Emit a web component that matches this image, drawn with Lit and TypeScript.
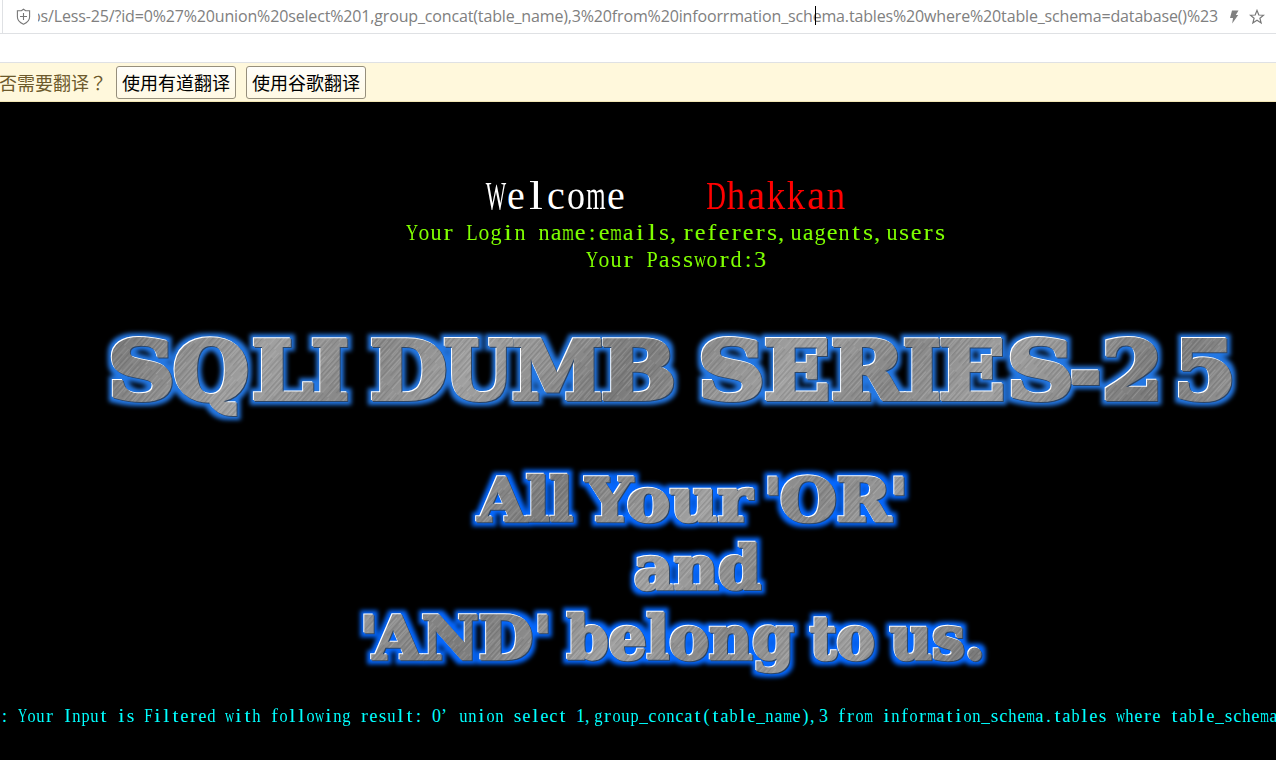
import { LitElement, html, svg, css } from "lit";
import { customElement, property } from "lit/decorators.js";

/* Fixed-pitch serif text: every character sits in a half-em cell. */
const SQUEEZE: Record<string, number> = {
  W: 0.54, m: 0.62, w: 0.7, D: 0.68, Y: 0.7, L: 0.78, P: 0.84, F: 0.84,
  h: 0.92, k: 0.92, n: 0.92, u: 0.92, o: 0.9, p: 0.9, g: 0.92, d: 0.92,
  b: 0.9, _: 0.96, i: 1.25, l: 1.25, t: 1.2, r: 1.15, s: 1.08, f: 1.1, I: 1.1,
};

@customElement("pitch-text")
export class PitchText extends LitElement {
  @property() text = "";
  static styles = css`
    :host { display: inline-flex; white-space: pre; font-family: "Liberation Serif", serif; }
    .c { display: inline-flex; justify-content: center; width: 0.5em; flex: none; }
    .p { justify-content: flex-start; }
  `;
  render() {
    return [...this.text].map((ch) => {
      const s = SQUEEZE[ch];
      const cls = ch === "," || ch === "’" ? "c p" : "c";
      return s
        ? html`<span class=${cls} style="transform:scaleX(${s})">${ch}</span>`
        : html`<span class=${cls}>${ch}</span>`;
    });
  }
}

/* [text, left, width] */
type Piece = [string, number, number];
const TITLE: Piece[] = [
  ["S", 108, 67], ["Q", 173, 76], ["L", 252, 61], ["I", 311, 38],
  ["D", 370, 77], ["U", 444, 69], ["M", 512, 91], ["B", 601, 75],
  ["S", 698, 67], ["E", 764, 66], ["R", 831, 73], ["I", 903, 38], ["E", 939, 66],
  ["S", 1007, 67], ["-", 1070, 31], ["2", 1102, 61], ["5", 1174, 62],
];
const LINES: { y: number; parts: Piece[] }[] = [
  { y: 418.5, parts: [["All", 478, 95], ["Your", 586, 166], ["'", 764, 18], ["OR", 780, 111], ["'", 890, 18]] },
  { y: 486.5, parts: [["and", 634, 127]] },
  { y: 556.5, parts: [["'", 360, 18], ["AND", 373, 160], ["'", 534, 18], ["belong", 567, 227], ["to", 810, 65], ["us.", 890, 95]] },
];

@customElement("metal-banner")
export class MetalBanner extends LitElement {
  static styles = css`
    :host { display: block; }
    svg { display: block; }
    text { font-family: "DejaVu Serif", serif; font-weight: 700; fill: url(#metal); stroke: url(#metal); stroke-linejoin: miter; }
    .title { font-size: 79.5px; stroke-width: 4px; }
    .sub { font-size: 60px; stroke-width: 2.6px; }
  `;
  private line(parts: Piece[], y: number, cls: string) {
    return parts.map(
      ([t, x, w]) => svg`<text class=${cls} x=${x} y=${y} textLength=${w} lengthAdjust="spacingAndGlyphs">${t}</text>`,
    );
  }
  private glow(id: string, color: string, r: number, blur: number) {
    return svg`<filter id=${id} filterUnits="userSpaceOnUse" x="0" y="150" width="1276" height="450" color-interpolation-filters="sRGB">
      <feMorphology in="SourceAlpha" operator="dilate" radius=${r} result="fat"></feMorphology>
      <feGaussianBlur in="fat" stdDeviation=${blur} result="soft"></feGaussianBlur>
      <feFlood flood-color=${color}></feFlood>
      <feComposite in2="soft" operator="in" result="halo"></feComposite>
      <feOffset in="SourceAlpha" dx="-1" dy="-1" result="up"></feOffset>
      <feFlood flood-color="#fff"></feFlood>
      <feComposite in2="up" operator="in" result="light"></feComposite>
      <feOffset in="SourceAlpha" dx="1" dy="1" result="down"></feOffset>
      <feFlood flood-color="#2c4566"></feFlood>
      <feComposite in2="down" operator="in" result="dark"></feComposite>
      <feMerge>
        <feMergeNode in="halo"></feMergeNode>
        <feMergeNode in="light"></feMergeNode>
        <feMergeNode in="dark"></feMergeNode>
        <feMergeNode in="SourceGraphic"></feMergeNode>
      </feMerge>
    </filter>`;
  }
  render() {
    return html`<svg width="1276" height="600" viewBox="0 0 1276 600">
      <defs>
        <linearGradient id="tone" gradientUnits="userSpaceOnUse" x1="0" y1="0" x2="190" y2="120" spreadMethod="reflect">
          <stop offset="0" stop-color="#868686"></stop>
          <stop offset="0.4" stop-color="#a0a0a0"></stop>
          <stop offset="0.7" stop-color="#8e8e8e"></stop>
          <stop offset="1" stop-color="#7a7a7a"></stop>
        </linearGradient>
        <pattern id="brush" patternUnits="userSpaceOnUse" width="23" height="61" patternTransform="rotate(42) scale(0.62 0.8)">
          <rect x="1" width="0.8" height="44" fill="#fff" opacity="0.28"></rect>
          <rect x="4" y="10" width="1" height="40" fill="#000" opacity="0.2"></rect>
          <rect x="6.5" width="0.8" height="30" fill="#fff" opacity="0.22"></rect>
          <rect x="9" y="20" width="0.7" height="41" fill="#fff" opacity="0.3"></rect>
          <rect x="11.5" width="1" height="50" fill="#000" opacity="0.17"></rect>
          <rect x="14" y="8" width="0.8" height="36" fill="#fff" opacity="0.24"></rect>
          <rect x="17" width="1" height="61" fill="#000" opacity="0.14"></rect>
          <rect x="20" y="25" width="0.8" height="36" fill="#fff" opacity="0.3"></rect>
        </pattern>
        <pattern id="metal" patternUnits="userSpaceOnUse" width="1276" height="600">
          <rect width="1276" height="600" fill="url(#tone)"></rect>
          <rect width="1276" height="600" fill="url(#brush)"></rect>
        </pattern>
        ${this.glow("glow-title", "#2377e3", 4, 1.9)}
        ${this.glow("glow-sub", "#0568ff", 4, 2)}
      </defs>
      <g filter="url(#glow-title)">${this.line(TITLE, 297, "title")}</g>
      <g filter="url(#glow-sub)">${LINES.map((l) => this.line(l.parts, l.y, "sub"))}</g>
    </svg>`;
  }
}

@customElement("app-root")
export class AppRoot extends LitElement {
  static styles = css`
    :host { display: block; width: 1276px; height: 760px; overflow: hidden; background: #000; }
    * { box-sizing: border-box; }
    .address { display: flex; align-items: center; height: 34px; background: #fff; border-bottom: 1px solid #dfe1e4; padding-left: 2px; }
    .field { display: flex; align-items: center; height: 33px; flex: 1; border-left: 1px solid #dfe1e4; padding-left: 12px; }
    .shield { flex: none; }
    .url { position: relative; display: flex; justify-content: flex-end; width: 1180px; height: 33px; margin-left: 6px; overflow: hidden; font: 16px/32px "Open Sans", sans-serif; letter-spacing: -0.153px; color: #808080; white-space: nowrap; }
    .caret { position: absolute; left: 777px; top: 6px; width: 1px; height: 19px; background: #000; }
    .bolt { margin-left: 9px; }
    .star { margin-left: 8px; }
    .gap { height: 28px; background: #fff; }
    .bar { display: flex; align-items: center; gap: 10px; height: 40px; background: #fff8dc; border-top: 1px solid #dfe1e4; border-bottom: 1px solid #f2e6b4; font: 18px/26px "Noto Sans CJK SC", sans-serif; color: #6d5a2c; white-space: nowrap; overflow: hidden; }
    .ask { width: 107px; margin-left: -1px; }
    .mark { font-family: "Noto Sans CJK TC", sans-serif; }
    .btn { width: 120px; height: 33px; border: 1px solid #968f7c; border-radius: 3px; background: linear-gradient(#fffefa, #fff9e4); color: #000; font: inherit; line-height: 30px; padding: 0; text-align: center; }
    .page { display: grid; grid-template-columns: 1276px; grid-template-rows: 658px; background: #000; }
    .page > * { grid-area: 1 / 1; }
    .stack { display: flex; flex-direction: column; height: 658px; }
    .hello { padding: 71px 0 0 486px; font-size: 40px; line-height: 46px; color: #fff; height: 117px; white-space: pre; }
    .name { color: #f00; }
    .info { padding-left: 406px; font-size: 24px; line-height: 27px; color: #80ff00; height: 27px; }
    .pass { padding-left: 586px; }
    .result { margin-top: auto; height: 54px; padding-left: 0; font-size: 18px; line-height: 21px; color: #0ff; white-space: nowrap; overflow: hidden; }
  `;
  render() {
    return html`
      <header class="address">
        <div class="field">
          <svg class="shield" width="17" height="18" viewBox="0 0 17 18" fill="none" stroke="#777" stroke-width="1.1">
            <path d="M8.5 1.2 L10.6 2.8 H14.6 V9 Q14.6 13.6 8.5 16.2 Q2.4 13.6 2.4 9 V2.8 H6.4 Z"></path>
            <path d="M8.5 5 V12 M5 8.5 H12"></path>
          </svg>
          <div class="url"><span>ps/Less-25/?id=0%27%20union%20select%201,group_concat(table_name),3%20from%20infoorrmation_schema.tables%20where%20table_schema=database()%23</span><i class="caret"></i></div>
          <svg class="bolt" width="14" height="16" viewBox="0 0 14 16" fill="#808080"><path d="M5 1.5 H11.5 L8.8 6 H11.2 L5.2 14.5 L6 9 H3 Z"></path></svg>
          <svg class="star" width="16" height="16" viewBox="0 0 16 16" fill="none" stroke="#777" stroke-width="1.2"><path d="M8 1.4 L9.8 6 L14.6 6.2 L10.9 9.2 L12.1 13.9 L8 11.2 L3.9 13.9 L5.1 9.2 L1.4 6.2 L6.2 6 Z"></path></svg>
        </div>
      </header>
      <div class="gap"></div>
      <div class="bar">
        <span class="ask">否需要翻译<span class="mark" lang="zh-TW">？</span></span>
        <button class="btn">使用有道翻译</button>
        <button class="btn">使用谷歌翻译</button>
      </div>
      <main class="page">
        <metal-banner></metal-banner>
        <div class="stack">
          <div class="hello"><pitch-text text="Welcome    "></pitch-text><pitch-text class="name" text="Dhakkan"></pitch-text></div>
          <div class="info"><pitch-text text="Your Login name:emails,referers,uagents,users"></pitch-text></div>
          <div class="info pass"><pitch-text text="Your Password:3"></pitch-text></div>
          <div class="result"><pitch-text text=": Your Input is Filtered with following result: 0’ union select 1,group_concat(table_name),3 from information_schema.tables where table_schema"></pitch-text></div>
        </div>
      </main>
    `;
  }
}
